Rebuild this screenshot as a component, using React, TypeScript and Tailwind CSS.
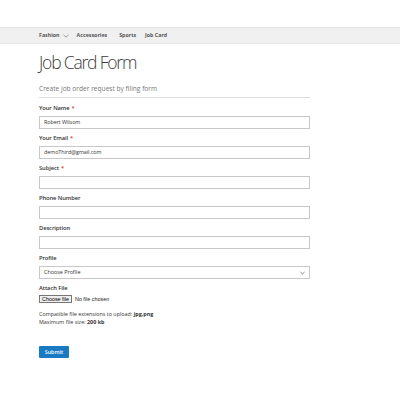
import React from "react";

type FieldProps = {
  label: string;
  required?: boolean;
  value?: string;
};

const Field = ({ label, required, value }: FieldProps) => {
  return (
    <div className="mb-[3px]">
      <div className="h-[12px] leading-[12px] text-[5.8px] font-semibold tracking-[-0.1px] text-[#333]">
        {label}
        {required && <span className="ml-[2px] text-[#e02b27]">*</span>}
      </div>
      <div className="mt-[2px] h-[13px] border border-[#c8c8c8] bg-white px-[4px] text-[5.4px] leading-[11px] tracking-[-0.05px] text-[#333]">
        {value}
      </div>
    </div>
  );
};

const App = () => {
  return (
    <div className="h-[400px] w-[400px] bg-white font-['Open_Sans',sans-serif] text-[#333]">
      <div className="h-[27px]" />
      <div className="flex h-[17px] items-center border-y border-[#e6e6e6] bg-[#f0f0f0] pl-[39px] text-[5.3px] font-bold text-[#575757]">
        <span className="flex items-center gap-[3px]">
          Fashion
          <svg width="6" height="4" viewBox="0 0 6 4">
            <path d="M0.5 0.8 L3 3.2 L5.5 0.8" stroke="#777" strokeWidth="0.7" fill="none" />
          </svg>
        </span>
        <span className="ml-[8px]">Accessories</span>
        <span className="ml-[12px]">Sports</span>
        <span className="ml-[9px]">Job Card</span>
      </div>

      <div className="w-[310px] pl-[39px]">
        <h1 className="mt-[6px] h-[25px] text-[17.5px] font-light leading-[25px] tracking-[-1.2px] text-[#3a3a3a]">
          Job Card Form
        </h1>
        <div className="mt-[8px] border-b border-[#dcdcdc] pb-[2px] text-[6.6px] leading-[12px] text-[#777]">
          Create job order request by filing form
        </div>

        <div className="mt-[4px]">
          <Field label="Your Name" required value="Robert Wilsom" />
          <Field label="Your Email" required value="demoThird@gmail.com" />
          <Field label="Subject" required />
          <Field label="Phone Number" />
          <Field label="Description" />

          <div className="mb-[3px]">
            <div className="h-[12px] text-[5.8px] font-semibold leading-[12px] tracking-[-0.1px]">Profile</div>
            <div className="mt-[2px] flex h-[13px] items-center justify-between border border-[#c8c8c8] bg-white pl-[4px] pr-[4px] text-[5.4px]">
              <span>Choose Profile</span>
              <svg width="5" height="4" viewBox="0 0 6 4">
                <path d="M0.5 0.8 L3 3.2 L5.5 0.8" stroke="#555" strokeWidth="0.9" fill="none" />
              </svg>
            </div>
          </div>

          <div className="h-[12px] text-[5.8px] font-semibold leading-[12px] tracking-[-0.1px]">Attach File</div>
          <div className="mt-[1px] flex items-center gap-[3px] font-['Liberation_Sans',sans-serif] text-[5.4px]">
            <span className="h-[8px] border border-[#767676] bg-[#efefef] px-[2px] leading-[6px] text-black">
              Choose file
            </span>
            <span className="text-[#222]">No file chosen</span>
          </div>

          <div className="mt-[7px] text-[5.4px] leading-[8px] text-[#333]">
            <div>
              Compatible file extensions to upload: <b>jpg,png</b>
            </div>
            <div>
              Maximum file size: <b>200 kb</b>
            </div>
          </div>

          <button className="mt-[20px] h-[12px] w-[30px] rounded-[1px] bg-[#1979c3] text-[5.4px] font-semibold text-white">
            Submit
          </button>
        </div>
      </div>
    </div>
  );
};

export default App;
